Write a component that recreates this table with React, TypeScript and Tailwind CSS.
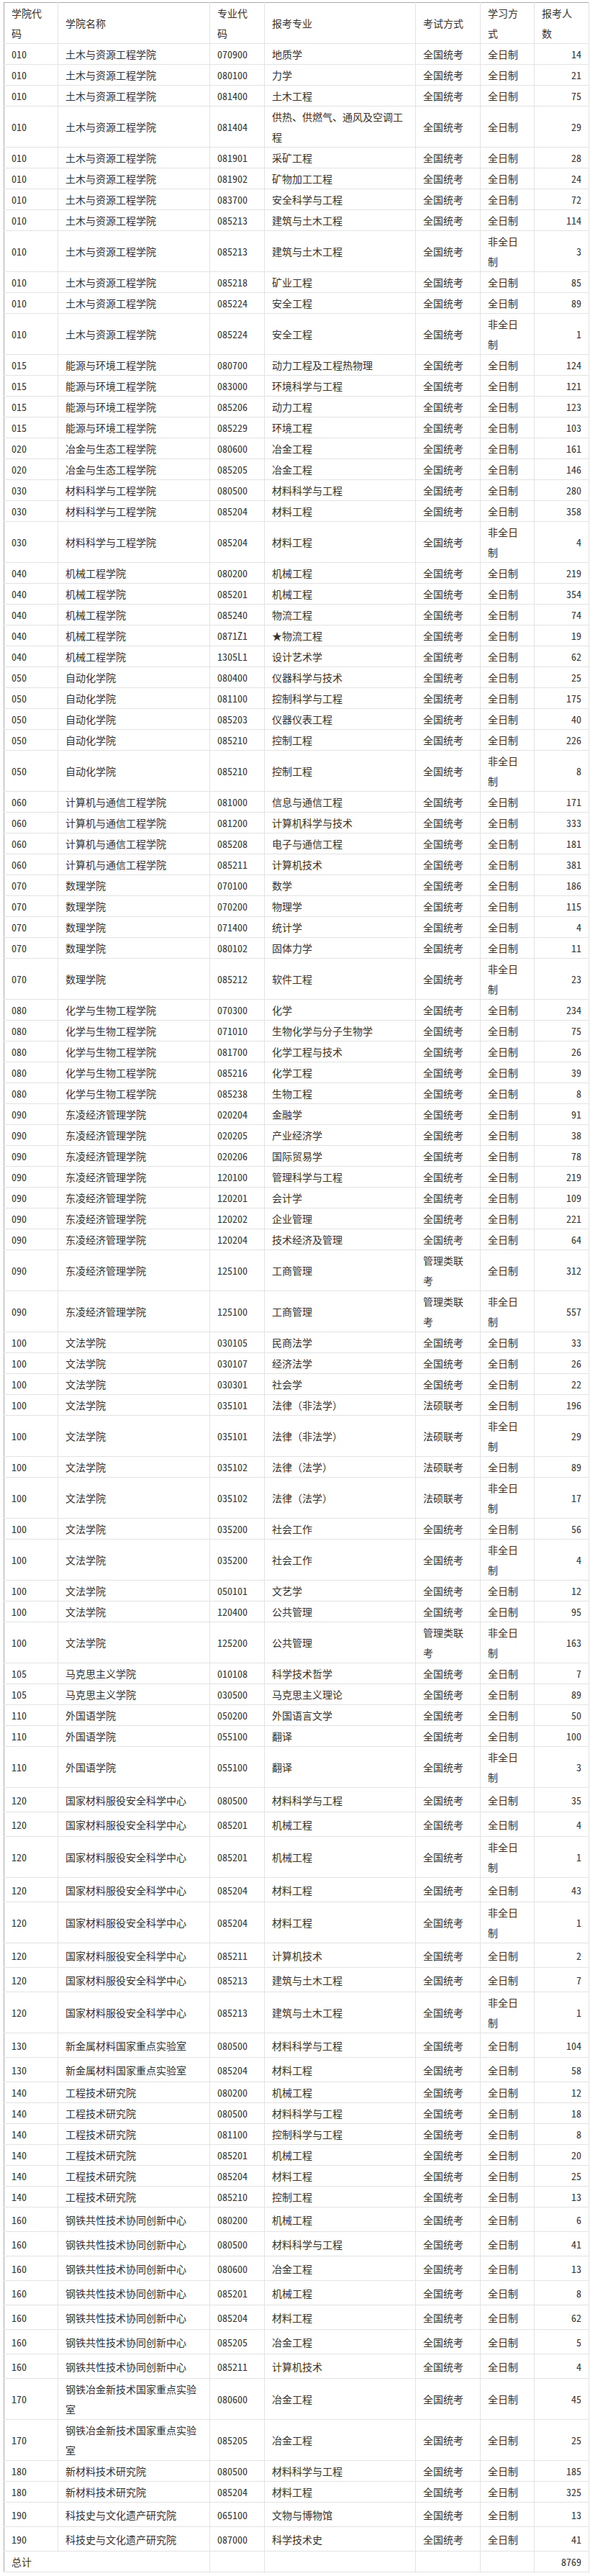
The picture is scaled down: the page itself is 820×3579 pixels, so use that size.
import React from "react";

const NAMES: Record<string, string> = {
  "010": "土木与资源工程学院",
  "015": "能源与环境工程学院",
  "020": "冶金与生态工程学院",
  "030": "材料科学与工程学院",
  "040": "机械工程学院",
  "050": "自动化学院",
  "060": "计算机与通信工程学院",
  "070": "数理学院",
  "080": "化学与生物工程学院",
  "090": "东凌经济管理学院",
  "100": "文法学院",
  "105": "马克思主义学院",
  "110": "外国语学院",
  "120": "国家材料服役安全科学中心",
  "130": "新金属材料国家重点实验室",
  "140": "工程技术研究院",
  "160": "钢铁共性技术协同创新中心",
  "170": "钢铁冶金新技术国家重点实验室",
  "180": "新材料技术研究院",
  "190": "科技史与文化遗产研究院",
};

type R = [string, string, string, number, string?];

const ROWS: R[] = [
  ["010", "070900", "地质学", 14],
  ["010", "080100", "力学", 21],
  ["010", "081400", "土木工程", 75],
  ["010", "081404", "供热、供燃气、通风及空调工程", 29],
  ["010", "081901", "采矿工程", 28],
  ["010", "081902", "矿物加工工程", 24],
  ["010", "083700", "安全科学与工程", 72],
  ["010", "085213", "建筑与土木工程", 114],
  ["010", "085213", "建筑与土木工程", 3, "P"],
  ["010", "085218", "矿业工程", 85],
  ["010", "085224", "安全工程", 89],
  ["010", "085224", "安全工程", 1, "P"],
  ["015", "080700", "动力工程及工程热物理", 124],
  ["015", "083000", "环境科学与工程", 121],
  ["015", "085206", "动力工程", 123],
  ["015", "085229", "环境工程", 103],
  ["020", "080600", "冶金工程", 161],
  ["020", "085205", "冶金工程", 146],
  ["030", "080500", "材料科学与工程", 280],
  ["030", "085204", "材料工程", 358],
  ["030", "085204", "材料工程", 4, "P"],
  ["040", "080200", "机械工程", 219],
  ["040", "085201", "机械工程", 354],
  ["040", "085240", "物流工程", 74],
  ["040", "0871Z1", "★物流工程", 19],
  ["040", "1305L1", "设计艺术学", 62],
  ["050", "080400", "仪器科学与技术", 25],
  ["050", "081100", "控制科学与工程", 175],
  ["050", "085203", "仪器仪表工程", 40],
  ["050", "085210", "控制工程", 226],
  ["050", "085210", "控制工程", 8, "P"],
  ["060", "081000", "信息与通信工程", 171],
  ["060", "081200", "计算机科学与技术", 333],
  ["060", "085208", "电子与通信工程", 181],
  ["060", "085211", "计算机技术", 381],
  ["070", "070100", "数学", 186],
  ["070", "070200", "物理学", 115],
  ["070", "071400", "统计学", 4],
  ["070", "080102", "固体力学", 11],
  ["070", "085212", "软件工程", 23, "P"],
  ["080", "070300", "化学", 234],
  ["080", "071010", "生物化学与分子生物学", 75],
  ["080", "081700", "化学工程与技术", 26],
  ["080", "085216", "化学工程", 39],
  ["080", "085238", "生物工程", 8],
  ["090", "020204", "金融学", 91],
  ["090", "020205", "产业经济学", 38],
  ["090", "020206", "国际贸易学", 78],
  ["090", "120100", "管理科学与工程", 219],
  ["090", "120201", "会计学", 109],
  ["090", "120202", "企业管理", 221],
  ["090", "120204", "技术经济及管理", 64],
  ["090", "125100", "工商管理", 312, "G"],
  ["090", "125100", "工商管理", 557, "GP"],
  ["100", "030105", "民商法学", 33],
  ["100", "030107", "经济法学", 26],
  ["100", "030301", "社会学", 22],
  ["100", "035101", "法律（非法学）", 196, "F"],
  ["100", "035101", "法律（非法学）", 29, "FP"],
  ["100", "035102", "法律（法学）", 89, "F"],
  ["100", "035102", "法律（法学）", 17, "FP"],
  ["100", "035200", "社会工作", 56],
  ["100", "035200", "社会工作", 4, "P"],
  ["100", "050101", "文艺学", 12],
  ["100", "120400", "公共管理", 95],
  ["100", "125200", "公共管理", 163, "GP"],
  ["105", "010108", "科学技术哲学", 7],
  ["105", "030500", "马克思主义理论", 89],
  ["110", "050200", "外国语言文学", 50],
  ["110", "055100", "翻译", 100],
  ["110", "055100", "翻译", 3, "P"],
  ["120", "080500", "材料科学与工程", 35],
  ["120", "085201", "机械工程", 4],
  ["120", "085201", "机械工程", 1, "P"],
  ["120", "085204", "材料工程", 43],
  ["120", "085204", "材料工程", 1, "P"],
  ["120", "085211", "计算机技术", 2],
  ["120", "085213", "建筑与土木工程", 7],
  ["120", "085213", "建筑与土木工程", 1, "P"],
  ["130", "080500", "材料科学与工程", 104],
  ["130", "085204", "材料工程", 58],
  ["140", "080200", "机械工程", 12],
  ["140", "080500", "材料科学与工程", 18],
  ["140", "081100", "控制科学与工程", 8],
  ["140", "085201", "机械工程", 20],
  ["140", "085204", "材料工程", 25],
  ["140", "085210", "控制工程", 13],
  ["160", "080200", "机械工程", 6],
  ["160", "080500", "材料科学与工程", 41],
  ["160", "080600", "冶金工程", 13],
  ["160", "085201", "机械工程", 8],
  ["160", "085204", "材料工程", 62],
  ["160", "085205", "冶金工程", 5],
  ["160", "085211", "计算机技术", 4],
  ["170", "080600", "冶金工程", 45],
  ["170", "085205", "冶金工程", 25],
  ["180", "080500", "材料科学与工程", 185],
  ["180", "085204", "材料工程", 325],
  ["190", "065100", "文物与博物馆", 13],
  ["190", "087000", "科学技术史", 41],
];

const cell = "border border-[#e3e3e3] px-[10px] py-0 text-left align-middle font-normal";
const first = "border border-[#e3e3e3] border-l-[#a9a9a9] px-[10px] py-0 text-left align-middle font-normal";
const numCell = "border border-[#e3e3e3] px-[10px] py-0 text-right align-middle font-normal";

export default function App() {
  return (
    <div
      className="bg-white pl-[5px] pt-[3px] pb-[6px] text-[14px] leading-[28px] text-[#333]"
      style={{ fontFamily: '"Noto Sans Mono CJK SC", "Noto Sans CJK SC", sans-serif' }}
    >
      <table className="w-[813px] table-fixed border-collapse">
        <colgroup>
          <col className="w-[75px]" />
          <col className="w-[211px]" />
          <col className="w-[76px]" />
          <col className="w-[210px]" />
          <col className="w-[90px]" />
          <col className="w-[75px]" />
          <col className="w-[76px]" />
        </colgroup>
        <thead>
          <tr className="h-[57px]">
            <th className="border border-[#e3e3e3] border-t-[#a9a9a9] border-l-[#a9a9a9] px-[10px] py-0 text-left align-middle font-normal">学院代码</th>
            <th className="border border-[#e3e3e3] border-t-[#a9a9a9] px-[10px] py-0 text-left align-middle font-normal">学院名称</th>
            <th className="border border-[#e3e3e3] border-t-[#a9a9a9] px-[10px] py-0 text-left align-middle font-normal">专业代码</th>
            <th className="border border-[#e3e3e3] border-t-[#a9a9a9] px-[10px] py-0 text-left align-middle font-normal">报考专业</th>
            <th className="border border-[#e3e3e3] border-t-[#a9a9a9] px-[10px] py-0 text-left align-middle font-normal">考试方式</th>
            <th className="border border-[#e3e3e3] border-t-[#a9a9a9] px-[10px] py-0 text-left align-middle font-normal">学习方式</th>
            <th className="border border-[#e3e3e3] border-t-[#a9a9a9] px-[10px] py-0 text-left align-middle font-normal">报考人数</th>
          </tr>
        </thead>
        <tbody>
          {ROWS.map(([code, mcode, major, count, flags = ""], i) => {
            const name = NAMES[code];
            const exam = flags.includes("G") ? "管理类联考" : flags.includes("F") ? "法硕联考" : "全国统考";
            const mode = flags.includes("P") ? "非全日制" : "全日制";
            const double =
              flags.includes("P") || flags.includes("G") || name.length > 13 || major.length > 13;
            const tall = !double && name.length >= 11;
            const h = double ? "h-[57px]" : tall ? "h-[34px]" : "h-[29px]";
            return (
              <tr key={i} className={h}>
                <td className={first}>{code}</td>
                <td className={cell}>{name}</td>
                <td className={cell}>{mcode}</td>
                <td className={cell}>{major}</td>
                <td className={cell}>{exam}</td>
                <td className={cell}>{mode}</td>
                <td className={numCell}>{count}</td>
              </tr>
            );
          })}
          <tr className="h-[29px]">
            <td className={first} colSpan={2}>总计</td>
            <td className={cell}></td>
            <td className={cell}></td>
            <td className={cell}></td>
            <td className={cell}></td>
            <td className={numCell}>8769</td>
          </tr>
        </tbody>
      </table>
    </div>
  );
}
